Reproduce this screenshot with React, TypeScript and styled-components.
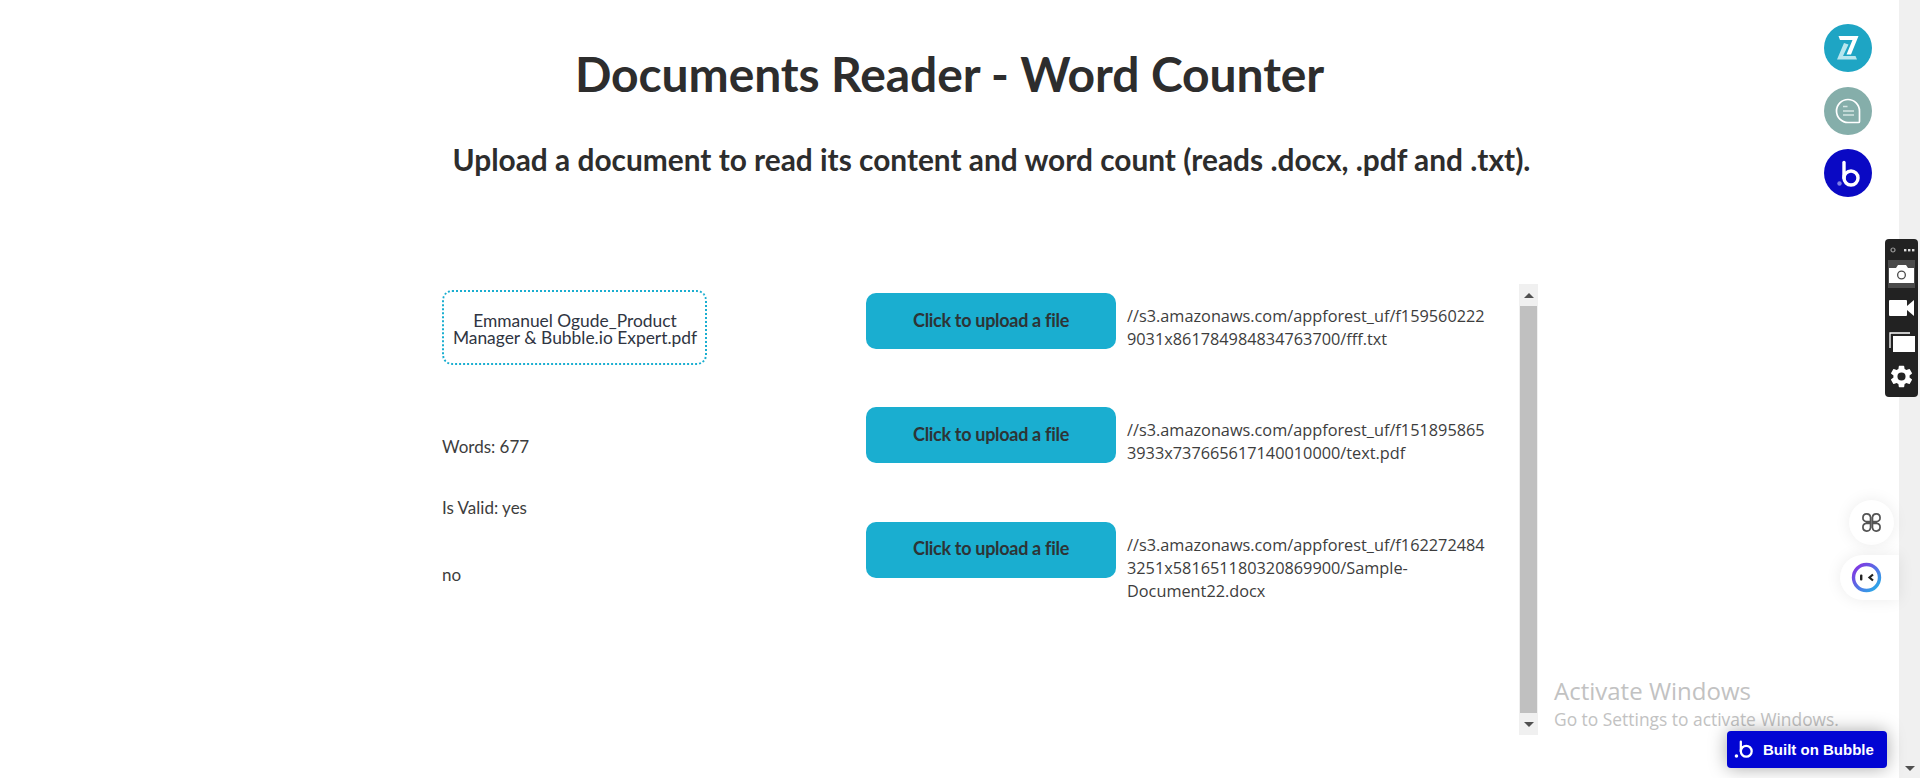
import React from "react";
import styled, { createGlobalStyle } from "styled-components";

const Global = createGlobalStyle`
  html, body { margin: 0; padding: 0; height: 778px; overflow: hidden; background: #fff; }
  #root { height: 778px; }
`;

const Page = styled.div`
  position: relative;
  display: flex;
  width: 1920px;
  height: 778px;
  overflow: hidden;
  font-family: Lato, "Liberation Sans", sans-serif;
  color: #2d2d2d;
`;

const Main = styled.main`
  flex: 1;
  min-width: 0;
  display: flex;
  flex-direction: column;
`;

const Title = styled.h1`
  margin: 45px 0 0;
  font-size: 48px;
  line-height: 58px;
  font-weight: 700;
  letter-spacing: -0.1px;
  text-align: center;
  color: #2d2d2d;
`;

const Subtitle = styled.h2`
  margin: 39px 0 0;
  padding-left: 84px;
  font-size: 29.85px;
  line-height: 36px;
  font-weight: 700;
  text-align: center;
  color: #2d2d2d;
`;

const Columns = styled.div`
  display: flex;
  margin: 106px 0 0 442px;
`;

const LeftColumn = styled.section`
  width: 424px;
  padding-top: 6px;
  display: flex;
  flex-direction: column;
  align-items: flex-start;
`;

const FileBox = styled.div`
  box-sizing: border-box;
  width: 265px;
  height: 75px;
  border: 2px dotted #1aaed0;
  border-radius: 10px;
  display: flex;
  align-items: center;
  justify-content: center;
  padding: 3px 0 0 1px;
  font-size: 17.4px;
  line-height: 17px;
  text-align: center;
  color: #2f3542;
`;

const Stat = styled.div<{ $top: number }>`
  margin-top: ${(p) => p.$top}px;
  font-size: 17px;
  line-height: 20px;
  color: #3d3d3d;
`;

const UploadPanel = styled.section`
  width: 672px;
  height: 451px;
  display: flex;
`;

const UploadList = styled.div`
  width: 653px;
  padding-top: 9px;
`;

const UploadRow = styled.div`
  display: flex;
  height: 114.4px;
`;

const UploadButton = styled.button`
  flex: none;
  width: 250px;
  height: 56px;
  border: 0;
  border-radius: 10px;
  background: #1aaed0;
  color: #2d3436;
  font-family: Lato, sans-serif;
  font-size: 18px;
  font-weight: 700;
  letter-spacing: -0.3px;
  padding: 0 0 3px;
`;

const FileUrl = styled.div`
  width: 362px;
  margin: 12px 0 0 11px;
  font-family: "Open Sans", sans-serif;
  font-size: 16.3px;
  line-height: 23px;
  color: #3d3d3d;
  overflow-wrap: anywhere;
`;

const Track = styled.div<{ $width: number }>`
  flex: none;
  width: ${(p) => p.$width}px;
  display: flex;
  flex-direction: column;
  align-items: center;
  background: #f0f0f0;
`;

const ArrowCell = styled.div<{ $height: number }>`
  flex: none;
  width: 100%;
  height: ${(p) => p.$height}px;
  display: flex;
  align-items: center;
  justify-content: center;
`;

const Arrow = styled.div<{ $down?: boolean }>`
  width: 0;
  height: 0;
  border-left: 5px solid transparent;
  border-right: 5px solid transparent;
  ${(p) =>
    p.$down ? "border-top: 5px solid #505050;" : "border-bottom: 5px solid #505050;"}
`;

const Thumb = styled.div`
  flex: 1;
  width: 17px;
  background: #c0c0c0;
`;

const PageBar = styled.div`
  flex: none;
  width: 21px;
  display: flex;
  flex-direction: column;
  justify-content: flex-end;
  background: #f0f0f0;
`;

const Watermark = styled.div`
  position: absolute;
  left: 1554px;
  top: 675px;
  font-family: "Open Sans", sans-serif;
  color: #c2c2c2;
`;

const WatermarkTitle = styled.div`
  font-size: 24px;
  line-height: 32px;
`;

const WatermarkHint = styled.div`
  font-size: 17.4px;
  line-height: 24px;
`;

const Badge = styled.div`
  position: absolute;
  left: 1727px;
  top: 731px;
  width: 160px;
  height: 37px;
  box-sizing: border-box;
  padding-left: 7px;
  display: flex;
  align-items: center;
  gap: 8px;
  border-radius: 4px;
  background: #0205d3;
  color: #fff;
  font-family: "Liberation Sans", Arial, sans-serif;
  font-weight: 700;
  font-size: 15px;
  box-shadow: 0 0 18px rgba(0, 0, 0, 0.35);
`;

const RoundIcon = styled.div<{ $top: number; $bg: string }>`
  position: absolute;
  left: 1824px;
  top: ${(p) => p.$top}px;
  width: 48px;
  height: 48px;
  border-radius: 50%;
  background: ${(p) => p.$bg};
  display: flex;
  align-items: center;
  justify-content: center;
`;

const Toolbar = styled.div`
  position: absolute;
  left: 1885px;
  top: 239px;
  width: 33px;
  height: 158px;
  box-sizing: border-box;
  border-radius: 4px;
  background: #222;
  display: flex;
  flex-direction: column;
  align-items: center;
`;

const ToolbarTop = styled.div`
  width: 100%;
  height: 21px;
  flex: none;
  display: flex;
  align-items: center;
  justify-content: center;
`;

const ToolSlot = styled.div<{ $active?: boolean }>`
  width: 27px;
  height: 28px;
  margin-bottom: 6px;
  flex: none;
  display: flex;
  align-items: center;
  justify-content: center;
  background: ${(p) => (p.$active ? "#4a4a4a" : "transparent")};
`;

const FloatCircle = styled.div`
  position: absolute;
  left: 1849px;
  top: 500px;
  width: 45px;
  height: 45px;
  border-radius: 50%;
  background: #fff;
  box-shadow: 0 0 16px rgba(0, 0, 0, 0.08);
  display: flex;
  align-items: center;
  justify-content: center;
`;

const FloatPill = styled.div`
  position: absolute;
  left: 1840px;
  top: 555px;
  width: 59px;
  height: 45px;
  box-sizing: border-box;
  padding-left: 11px;
  border-radius: 23px 0 0 23px;
  background: #fff;
  box-shadow: 0 0 16px rgba(0, 0, 0, 0.08);
  display: flex;
  align-items: center;
`;

const BubbleMark = ({ size, dot }: { size: number; dot: string }) => (
  <svg width={size} height={size} viewBox="0 0 24 24" fill="none">
    <circle cx="14" cy="14" r="6.2" stroke="#fff" strokeWidth="2.6" />
    <path d="M7.8 3v11" stroke="#fff" strokeWidth="2.6" strokeLinecap="round" />
    <circle cx="2.8" cy="19.5" r="2" fill={dot} />
  </svg>
);

const urls = [
  "//s3.amazonaws.com/appforest_uf/f1595602229031x861784984834763700/fff.txt",
  "//s3.amazonaws.com/appforest_uf/f1518958653933x737665617140010000/text.pdf",
  "//s3.amazonaws.com/appforest_uf/f1622724843251x581651180320869900/Sample-Document22.docx",
];

export default function App() {
  return (
    <Page>
      <Global />
      <Main>
        <Title>Documents Reader - Word Counter</Title>
        <Subtitle>Upload a document to read its content and word count (reads .docx, .pdf and .txt).</Subtitle>
        <Columns>
          <LeftColumn>
            <FileBox>
              <span>
                Emmanuel Ogude_Product
                <br />
                Manager &amp; Bubble.io Expert.pdf
              </span>
            </FileBox>
            <Stat $top={72}>Words: 677</Stat>
            <Stat $top={41}>Is Valid: yes</Stat>
            <Stat $top={47}>no</Stat>
          </LeftColumn>
          <UploadPanel>
            <UploadList>
              {urls.map((u) => (
                <UploadRow key={u}>
                  <UploadButton>Click to upload a file</UploadButton>
                  <FileUrl>{u}</FileUrl>
                </UploadRow>
              ))}
            </UploadList>
            <Track $width={19}>
              <ArrowCell $height={22}>
                <Arrow />
              </ArrowCell>
              <Thumb />
              <ArrowCell $height={22}>
                <Arrow $down />
              </ArrowCell>
            </Track>
          </UploadPanel>
        </Columns>
      </Main>
      <PageBar>
        <ArrowCell $height={20}>
          <Arrow $down />
        </ArrowCell>
      </PageBar>

      <Watermark>
        <WatermarkTitle>Activate Windows</WatermarkTitle>
        <WatermarkHint>Go to Settings to activate Windows.</WatermarkHint>
      </Watermark>

      <Badge>
        <BubbleMark size={21} dot="#fff" />
        Built on Bubble
      </Badge>

      <RoundIcon $top={24} $bg="#1ea5c4">
        <svg width="48" height="48" viewBox="0 0 48 48">
          <path d="M20 19l4.500 1.500L19 32h12.500l1.500 3.500H13z" fill="#b7e6ee" />
          <path d="M14.500 12H34.500L27 30.500h-4.500L28.500 16H16z" fill="#fff" />
        </svg>
      </RoundIcon>
      <RoundIcon $top={87} $bg="#85aeaa">
        <svg width="48" height="48" viewBox="0 0 48 48" fill="none">
          <path d="M24 12.500a11.500 11.500 0 1 0 0 23h10.500a1 1 0 0 0 1-1V24A11.500 11.500 0 0 0 24 12.500z" stroke="#fff" strokeWidth="1.700" />
          <path d="M19 19.500h4.500M19 24h11M19 28h11" stroke="#d5e6e4" strokeWidth="1.500" />
        </svg>
      </RoundIcon>
      <RoundIcon $top={149} $bg="#0a09c4">
        <svg width="48" height="48" viewBox="0 0 48 48" fill="none">
          <circle cx="27" cy="29" r="7" stroke="#fff" strokeWidth="3.400" />
          <path d="M20 13.500V29" stroke="#fff" strokeWidth="3.400" strokeLinecap="round" />
          <circle cx="15.500" cy="34.500" r="2.200" fill="#7f80e6" />
        </svg>
      </RoundIcon>

      <Toolbar>
        <ToolbarTop>
          <svg width="26" height="8" viewBox="0 0 26 8">
            <circle cx="4" cy="4" r="2" fill="none" stroke="#999" strokeWidth="1.2" />
            <rect x="15" y="3" width="2.4" height="2.4" fill="#ddd" />
            <rect x="19" y="3" width="2.4" height="2.4" fill="#ddd" />
            <rect x="23" y="3" width="2.4" height="2.4" fill="#ddd" />
          </svg>
        </ToolbarTop>
        <ToolSlot $active>
          <svg width="25" height="18" viewBox="0 0 25 18">
            <path fillRule="evenodd" fill="#fff" d="M0 3h7l2-3h8l2 3h6v15H0zM12.500 5.500a4.500 4.500 0 1 0 0 9 4.500 4.500 0 0 0 0-9zm0 1.300a3.200 3.200 0 1 1 0 6.400 3.200 3.200 0 0 1 0-6.400z" />
          </svg>
        </ToolSlot>
        <ToolSlot>
          <svg width="25" height="16" viewBox="0 0 25 16">
            <rect x="0" y="0" width="18" height="16" rx="1" fill="#fff" />
            <path d="M18 6l7-6v16l-7-6z" fill="#fff" />
          </svg>
        </ToolSlot>
        <ToolSlot>
          <svg width="26" height="20" viewBox="0 0 26 20" fill="none">
            <path d="M21 1H1v15" stroke="#fff" strokeWidth="1.300" />
            <rect x="4" y="4" width="22" height="16" fill="#fff" />
          </svg>
        </ToolSlot>
        <ToolSlot>
          <svg width="29" height="29" viewBox="0 0 24 24">
            <path fill="#fff" d="M19.14 12.94c.04-.3.06-.61.06-.94s-.02-.64-.07-.94l2.030-1.580a.5.500 0 0 0 .12-.61l-1.920-3.320a.5.500 0 0 0-.59-.22l-2.390.96a7 7 0 0 0-1.620-.94l-.36-2.540a.5.500 0 0 0-.48-.41h-3.840a.5.500 0 0 0-.47.41l-.36 2.540a7.200 7.200 0 0 0-1.620.94l-2.390-.96a.5.500 0 0 0-.59.22L2.740 8.870a.5.500 0 0 0 .12.61l2.030 1.580c-.05.3-.09.63-.09.94s.02.64.07.94l-2.030 1.580a.5.500 0 0 0-.12.61l1.920 3.320c.12.22.37.29.59.22l2.390-.96c.5.380 1.030.7 1.620.94l.36 2.540c.05.24.24.41.48.41h3.840c.24 0 .44-.17.47-.41l.36-2.540a7 7 0 0 0 1.620-.94l2.390.96c.22.08.47 0 .59-.22l1.920-3.320a.5.500 0 0 0-.12-.61zM12 15.600a3.600 3.600 0 1 1 0-7.200 3.600 3.600 0 0 1 0 7.200z" />
          </svg>
        </ToolSlot>
      </Toolbar>

      <FloatCircle>
        <svg width="21" height="21" viewBox="0 0 22 22" fill="none" stroke="#555" strokeWidth="1.800">
          <path d="M10 10H5.500A4 4 0 1 1 10 5.500zM12 10h4.500A4 4 0 1 0 12 5.500zM10 12H5.500A4 4 0 1 0 10 16.500zM12 12h4.500A4 4 0 1 1 12 16.500z" />
        </svg>
      </FloatCircle>
      <FloatPill>
        <svg width="31" height="31" viewBox="0 0 31 31" fill="none">
          <defs>
            <linearGradient id="ring" x1="0" y1="0" x2="1" y2="1">
              <stop offset="0" stopColor="#8a2be2" />
              <stop offset="1" stopColor="#22b5e8" />
            </linearGradient>
          </defs>
          <circle cx="15.500" cy="15.500" r="13" stroke="url(#ring)" strokeWidth="3.400" />
          <rect x="9" y="12.500" width="2.400" height="6" rx="1" fill="#222" />
          <path d="M22 12.500l-3.500 3 3.500 3" stroke="#222" strokeWidth="2.200" />
        </svg>
      </FloatPill>
    </Page>
  );
}
